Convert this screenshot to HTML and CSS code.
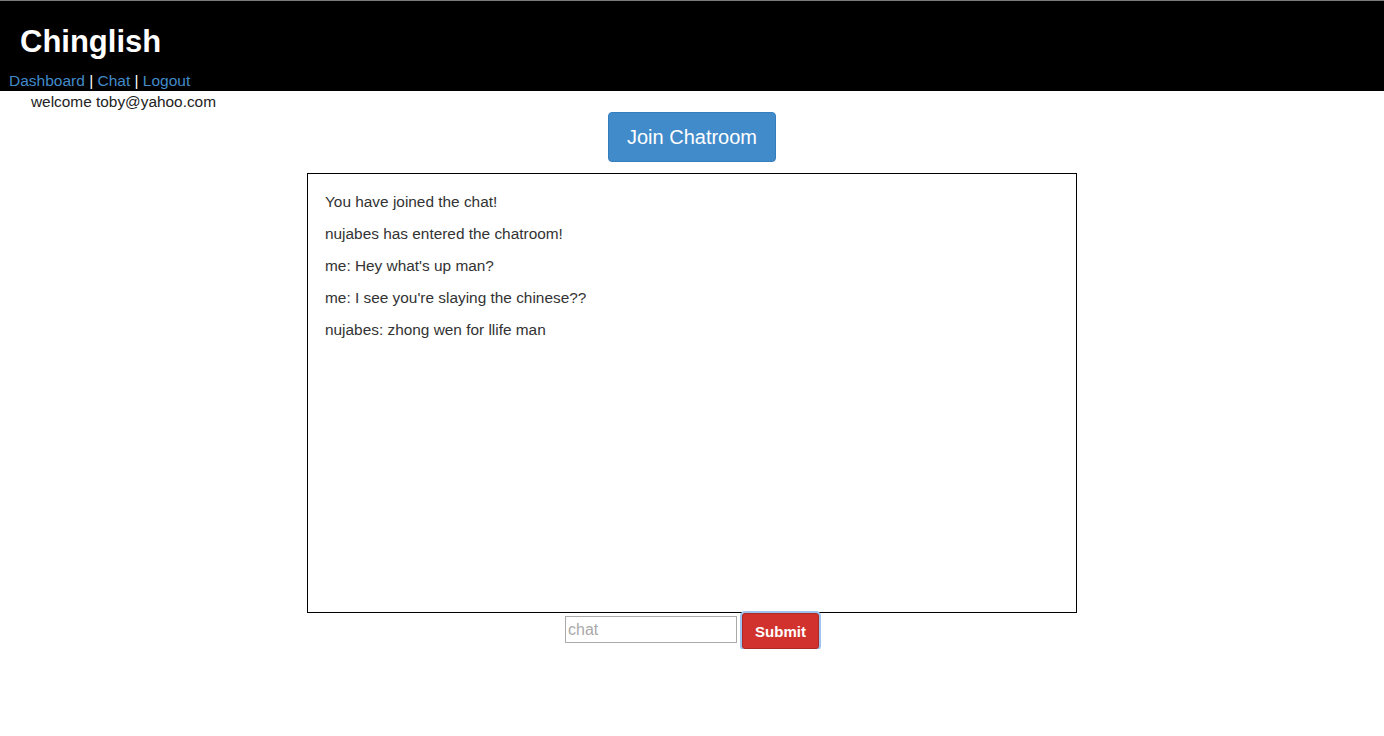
FILE: index.html
```html
<!DOCTYPE html>
<html>
<head>
<meta charset="utf-8">
<link rel="stylesheet" href="styles.css">
</head>
<body>
<header class="topbar">
  <h1 class="brand">Chinglish</h1>
  <nav class="nav"><a href="#">Dashboard</a> | <a href="#">Chat</a> | <a href="#">Logout</a></nav>
</header>
<div class="welcome">welcome toby@yahoo.com</div>
<main class="main">
  <button class="join-btn">Join Chatroom</button>
  <div class="chatbox">
    <p class="msg">You have joined the chat!</p>
    <p class="msg">nujabes has entered the chatroom!</p>
    <p class="msg">me: Hey what's up man?</p>
    <p class="msg">me: I see you're slaying the chinese??</p>
    <p class="msg">nujabes: zhong wen for llife man</p>
  </div>
  <form class="chat-form">
    <input class="chat-input" type="text" placeholder="chat">
    <button class="submit-btn" type="button">Submit</button>
  </form>
</main>
</body>
</html>
```
FILE: styles.css
```css
html, body {
  margin: 0;
  padding: 0;
  background: #fff;
  font-family: "Liberation Sans", Arial, sans-serif;
  color: #333;
}
.topbar {
  background: #000;
  border-top: 1px solid #7a7a7a;
  height: 90px;
  display: flex;
  flex-direction: column;
}
.brand {
  margin: 0;
  padding: 22px 0 0 20px;
  font-size: 31px;
  line-height: 38px;
  font-weight: bold;
  color: #fff;
  height: 48px;
}
.nav {
  padding-left: 9px;
  font-size: 15.5px;
  line-height: 19px;
  color: #fff;
}
.nav a {
  color: #428bca;
  text-decoration: none;
}
.welcome {
  padding-left: 31px;
  font-size: 15.4px;
  line-height: 21px;
  color: #222;
}
.main {
  display: flex;
  flex-direction: column;
  align-items: center;
}
.join-btn {
  margin-top: 0;
  width: 168px;
  height: 50px;
  background: #428bca;
  border: 1px solid #357ebd;
  border-radius: 4px;
  color: #fff;
  font-family: "Liberation Sans", Arial, sans-serif;
  font-size: 20px;
  padding: 0;
}
.chatbox {
  margin-top: 11px;
  border: 1px solid #000;
  padding: 18px 17px;
  box-sizing: border-box;
  width: 770px;
  height: 440px;
}
.msg {
  margin: 0 0 12px;
  font-size: 15.4px;
  line-height: 20px;
  color: #333;
}
.chat-form {
  display: flex;
  align-items: flex-start;
  gap: 5px;
  margin: 0;
}
.chat-input {
  margin: 3px 0 0;
  width: 172px;
  height: 27px;
  box-sizing: border-box;
  border: 1px solid #aaa;
  padding: 1px 2px;
  font-family: "Liberation Sans", Arial, sans-serif;
  font-size: 16px;
  border-radius: 0;
}
.chat-input::placeholder {
  color: #a9a9a9;
}
.submit-btn {
  width: 77px;
  height: 36px;
  background: #d2322d;
  border: 1px solid #ac2925;
  border-radius: 3px;
  color: #fff;
  font-family: "Liberation Sans", Arial, sans-serif;
  font-size: 15px;
  font-weight: bold;
  box-shadow: 0 0 0 2px #9ec3ee;
  padding: 0;
}
```
